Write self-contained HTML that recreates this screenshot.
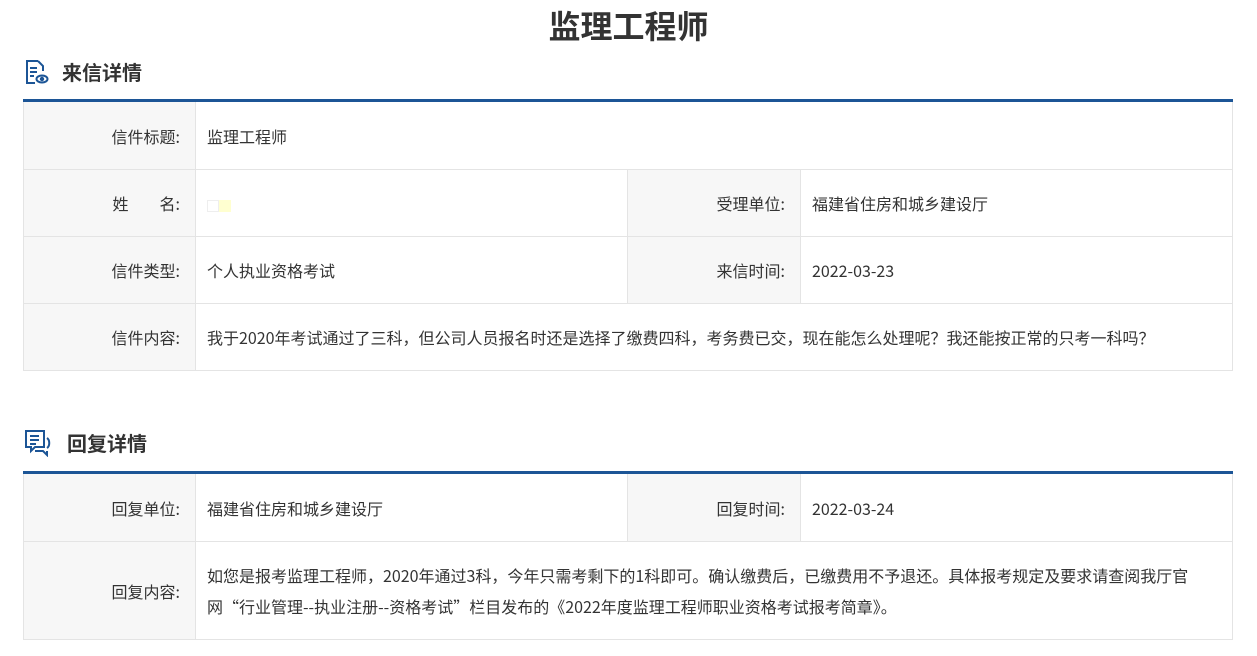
<!DOCTYPE html>
<html><head><meta charset="utf-8"><style>
*{margin:0;padding:0;box-sizing:border-box}
body{width:1257px;height:656px;background:#fff;font-family:"Noto Sans CJK SC","Liberation Sans",sans-serif;color:#333;position:relative;overflow:hidden}
h1{position:absolute;left:0;width:1257px;top:2px;text-align:center;font-size:32px;font-weight:bold;color:#333;line-height:46px}
.h{position:absolute;left:23px;font-size:20px;font-weight:bold;color:#333;line-height:28px;display:flex;align-items:center}
.h svg{margin-right:12px}
table{position:absolute;left:23px;width:1210px;border-collapse:collapse;border-top:3px solid #1c5596;font-size:16px;line-height:20px}
td{border:1px solid #e4e4e4;padding:0 11px;vertical-align:middle}
td.l{background:#f7f7f7;text-align:right;width:172px;padding-right:15px}
td.v1{width:432px}
td.l2{background:#f7f7f7;text-align:right;width:173px;padding-right:15px}
</style></head><body>
<h1>监理工程师</h1>
<div class="h" style="top:58px"><svg width="26" height="26" viewBox="0 0 26 26" fill="none" stroke="#1c5596" stroke-width="2"><path d="M15 2H4v22h8"/><path d="M15 2l5 5v5"/><path d="M7 9h7M7 13h7M7 17h4"/><ellipse cx="19" cy="20" rx="5.5" ry="3.5"/><circle cx="19" cy="20" r="1.2" fill="#1c5596"/></svg><span style="position:relative;left:1px">来信详情</span></div>
<table style="top:99px">
<tr style="height:69px"><td class="l">信件标题:</td><td colspan="3">监理工程师</td></tr>
<tr style="height:67px"><td class="l">姓<span style="display:inline-block;width:31px"></span>名:</td><td class="v1"><span style="display:inline-block;width:12px;height:12px;border:1px solid #eee;vertical-align:middle"></span><span style="display:inline-block;width:12px;height:12px;background:#ffffd0;vertical-align:middle"></span></td><td class="l2">受理单位:</td><td>福建省住房和城乡建设厅</td></tr>
<tr style="height:67px"><td class="l">信件类型:</td><td class="v1">个人执业资格考试</td><td class="l2">来信时间:</td><td>2022-03-23</td></tr>
<tr style="height:67px"><td class="l">信件内容:</td><td colspan="3">我于2020年考试通过了三科，但公司人员报名时还是选择了缴费四科，考务费已交，现在能怎么处理呢？我还能按正常的只考一科吗？</td></tr>
</table>
<div class="h" style="top:429px"><svg width="32" height="28" viewBox="0 0 32 28" fill="none" stroke="#1c5596" stroke-width="2"><path d="M3 2h18v16H12l-4 4v-4H3z"/><path d="M7 7h9M7 11h9M7 15h6"/><path d="M24 9c3 2 3 8 0 10"/><path d="M12 22h8l4 4v-4"/></svg>回复详情</div>
<table style="top:471px">
<tr style="height:69px"><td class="l">回复单位:</td><td class="v1">福建省住房和城乡建设厅</td><td class="l2">回复时间:</td><td>2022-03-24</td></tr>
<tr style="height:98px"><td class="l">回复内容:</td><td colspan="3" style="line-height:31px">如您是报考监理工程师，2020年通过3科，今年只需考剩下的1科即可。确认缴费后，已缴费用不予退还。具体报考规定及要求请查阅我厅官网“行业管理--执业注册--资格考试”栏目发布的《2022年度监理工程师职业资格考试报考简章》。</td></tr>
</table>
</body></html>
